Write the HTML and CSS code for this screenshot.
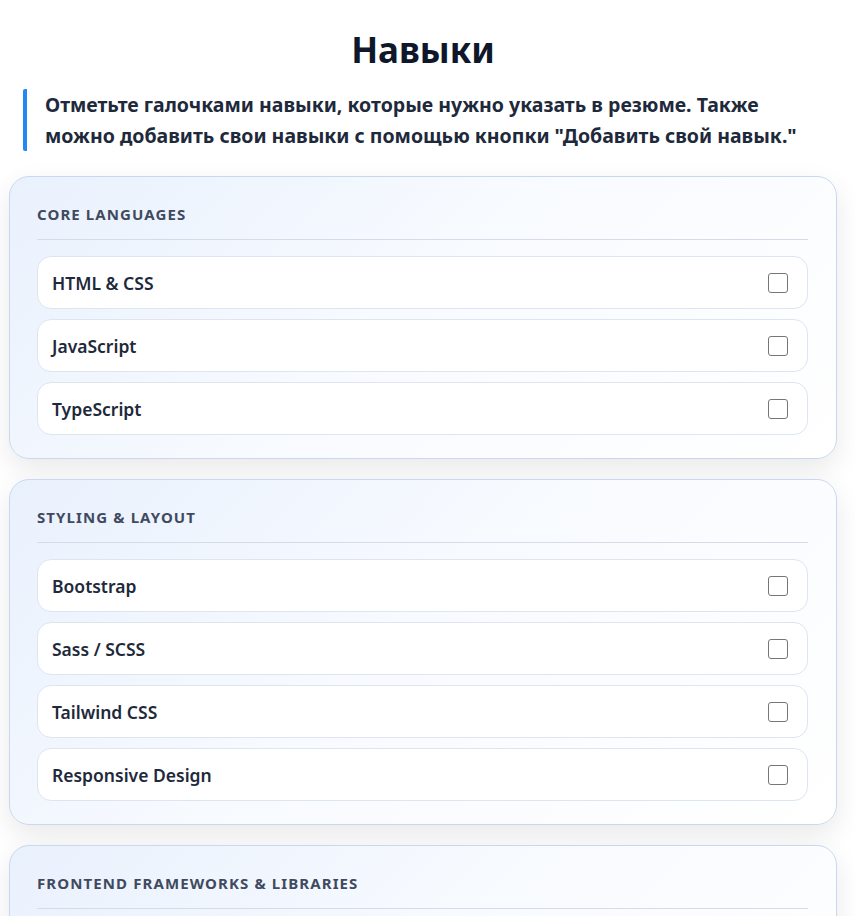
FILE: index.html
```html
<!doctype html>
<html>
    <head>
        <meta charset="utf-8">
        <title>Навыки</title>
        <meta name="viewport" content="width=device-width, initial-scale=1">
        <link rel="stylesheet" href="styles.css">
    </head>
    <body>
        <section class="container">
            <h1 class="title">Навыки</h1>
            <p class="hint">Отметьте галочками навыки, которые нужно указать в резюме. Также можно добавить свои навыки с помощью кнопки "Добавить свой навык."</p>

            <div class="group">
                <h2 class="group-name">Core Languages</h2>
                <label class="skill"><span>HTML &amp; CSS</span><input type="checkbox"></label>
                <label class="skill"><span>JavaScript</span><input type="checkbox"></label>
                <label class="skill"><span>TypeScript</span><input type="checkbox"></label>
            </div>

            <div class="group">
                <h2 class="group-name">Styling &amp; Layout</h2>
                <label class="skill"><span>Bootstrap</span><input type="checkbox"></label>
                <label class="skill"><span>Sass / SCSS</span><input type="checkbox"></label>
                <label class="skill"><span>Tailwind CSS</span><input type="checkbox"></label>
                <label class="skill"><span>Responsive Design</span><input type="checkbox"></label>
            </div>

            <div class="group">
                <h2 class="group-name">Frontend Frameworks &amp; Libraries</h2>
                <label class="skill"><span>React</span><input type="checkbox"></label>
                <label class="skill"><span>Vue.js</span><input type="checkbox"></label>
                <label class="skill"><span>Angular</span><input type="checkbox"></label>
            </div>
        </section>
    </body>
</html>
```

FILE: styles.css
```css
html {
    background: #fff;
}

body {
    margin: 0;
    font-family: "Noto Sans", "Open Sans", sans-serif;
    color: #1e293b;
}
.container {
    width: 828px;
    margin-left: 9px;
    padding-top: 26px;
}
.title {
    margin: 0 0 15px;
    text-align: center;
    font-size: 35px;
    line-height: 48px;
    font-weight: 700;
    color: #0f172a;
}
.hint {
    max-width: 762px;
    margin: 0 0 25px 14px;
    padding: 0 0 0 18px;
    border-left: 4px solid #2388f2;
    border-radius: 2px;
    font-size: 19.5px;
    line-height: 31px;
    font-weight: 700;
    color: #1e293b;
}
.group {
    margin-bottom: 20px;
    padding: 27px 28px 23px 27px;
    border: 1px solid #c9d8ee;
    border-radius: 20px;
    background: linear-gradient(135deg, #e9f1fd 0%, #f7faff 45%, #ffffff 100%);
    box-shadow: 0 10px 28px rgba(0, 0, 0, 0.09);
}
.group-name {
    margin: 0 0 16px;
    padding-bottom: 15px;
    border-bottom: 1px solid #d3dce8;
    font-size: 15px;
    line-height: 20px;
    font-weight: 700;
    letter-spacing: 1.1px;
    text-transform: uppercase;
    color: #3f4a5e;
}
.skill {
    display: flex;
    align-items: center;
    justify-content: space-between;
    height: 53px;
    box-sizing: border-box;
    margin-top: 10px;
    padding: 0 19px 0 14px;
    border: 1px solid #dde5f1;
    border-radius: 14px;
    background: #fff;
    font-size: 17.5px;
    font-weight: 600;
    color: #1e293b;
}
.group-name + .skill {
    margin-top: 0;
}
.skill input {
    width: 20px;
    height: 20px;
    margin: 0;
    appearance: none;
    border: 1.5px solid #767676;
    border-radius: 3px;
    background: #fff;
}
```
